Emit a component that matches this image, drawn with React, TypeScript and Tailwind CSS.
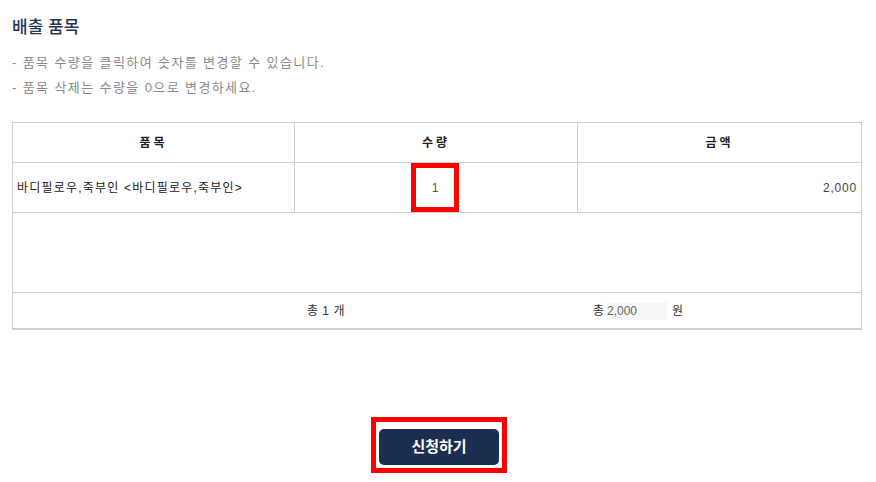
import React from "react";

export default function App() {
  const font = { fontFamily: '"Liberation Sans", "Noto Sans CJK KR", sans-serif' };
  return (
    <div className="w-[876px] h-[482px] bg-white overflow-hidden" style={font}>
      <div className="pl-[12px] pr-[14px]">
        <h2 className="pt-[17px] text-[17px] leading-[22px] text-[#253659] font-medium">배출 품목</h2>
        <div className="mt-[11px] text-[13px] leading-[25px] text-[#8a8a8a] tracking-[1.4px]">
          <p>- 품목 수량을 클릭하여 숫자를 변경할 수 있습니다.</p>
          <p>- 품목 삭제는 수량을 0으로 변경하세요.</p>
        </div>
        <div className="mt-[22px] w-[850px] border border-[#cfcfcf] border-b-2 text-[12px] text-[#222]">
          <div className="grid grid-cols-[282px_283px_1fr] h-[40px] border-b border-[#cfcfcf] font-bold tracking-[3px]">
            <div className="flex items-center justify-center border-r border-[#cfcfcf]">품목</div>
            <div className="flex items-center justify-center border-r border-[#cfcfcf]">수량</div>
            <div className="flex items-center justify-center">금액</div>
          </div>
          <div className="grid grid-cols-[282px_283px_1fr] h-[50px] border-b border-[#cfcfcf]">
            <div className="flex items-center pl-[4px] border-r border-[#cfcfcf] tracking-[1.2px]">바디필로우,죽부인 &lt;바디필로우,죽부인&gt;</div>
            <div className="flex items-start justify-center border-r border-[#cfcfcf]">
              <div className="w-[48px] h-[49px] border-[5px] border-[#ff0000] flex items-center justify-center text-[#555] mr-[2px]">
                1
              </div>
            </div>
            <div className="flex items-center justify-end pr-[4px] text-[#444] tracking-[0.8px]">2,000</div>
          </div>
          <div className="h-[80px] border-b border-[#cfcfcf]"></div>
          <div className="flex items-center h-[35px] text-[#333]">
            <span className="ml-[294px] tracking-[0.5px]">총 1 개</span>
            <span className="ml-[248px]">총</span>
            <span className="ml-[3px] inline-block w-[60px] bg-[#f7f7f7] text-[#666] leading-[18px]">2,000</span>
            <span className="ml-[5px]">원</span>
          </div>
        </div>
        <div className="mt-[87px] flex justify-center pl-[4px]">
          <div className="border-[5px] border-[#ff0000] px-[3px] pt-[7px] pb-[3px]">
            <button className="w-[120px] h-[36px] rounded-[5px] bg-[#1c2f50] text-white font-bold text-[15px]">
              신청하기
            </button>
          </div>
        </div>
      </div>
    </div>
  );
}
